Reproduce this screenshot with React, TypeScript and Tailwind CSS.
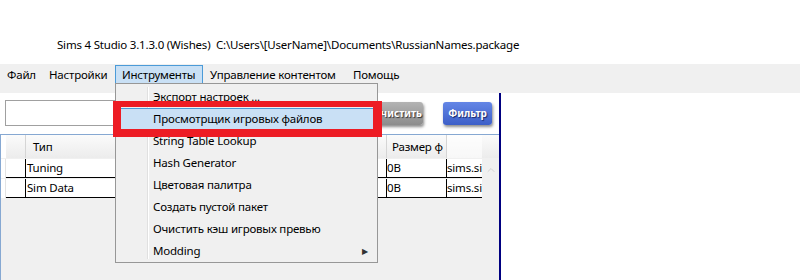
import { ChevronUp } from "lucide-react";

const menu = [
  { label: "Файл", w: "w-[42px]" },
  { label: "Настройки", w: "w-[73px]" },
  { label: "Инструменты", w: "w-[88px]", active: true },
  { label: "Управление контентом", w: "w-[143px]" },
  { label: "Помощь", w: "w-[60px]" },
];

const items = [
  "Экспорт настроек ...",
  "Просмотрщик игровых файлов",
  "String Table Lookup",
  "Hash Generator",
  "Цветовая палитра",
  "Создать пустой пакет",
  "Очистить кэш игровых превью",
  "Modding",
];

const rows = ["Tuning", "Sim Data"];

export default function App() {
  return (
    <div className="relative w-[800px] h-[280px] overflow-hidden bg-white text-[11.5px] tracking-[-0.2px] text-black font-['Noto_Sans',sans-serif] whitespace-nowrap">
      {/* window title */}
      <div className="h-[64px] flex items-end pb-[11px] pl-[57px] leading-[16px]">
        Sims 4 Studio 3.1.3.0 (Wishes)&nbsp;&nbsp;C:\Users\[UserName]\Documents\RussianNames.package
      </div>

      {/* menu strip */}
      <div className="h-[29px] bg-[#f0f0f0] pt-[1px]">
        <div className="flex h-[19px]">
          {menu.map((m) => (
            <div
              key={m.label}
              className={`${m.w} pl-[6px] flex items-center leading-none border ${
                m.active ? "bg-[#c9e0f5] border-[#4b9bd8]" : "border-transparent"
              }`}
            >
              {m.label}
            </div>
          ))}
        </div>
      </div>

      <div className="flex h-[187px]">
        <div className="w-[499px] flex flex-col">
          {/* search + buttons */}
          <div className="h-[41px] flex items-start">
            <div className="ml-[5px] mt-[7px] w-[355px] h-[26px] border border-[#a0a0a0] bg-white" />
            <button className="ml-[12px] mt-[9px] w-[51px] h-[23px] rounded-[3px] bg-gradient-to-b from-[#b4b4b4] to-[#8c8c8c] shadow-[1px_2px_3px_rgba(0,0,0,0.45)] text-white font-bold text-[10px] tracking-normal [text-shadow:1px_1px_1px_#333]">
              Очистить
            </button>
            <button className="ml-[20px] mt-[9px] w-[49px] h-[23px] rounded-[3px] bg-gradient-to-b from-[#6486e6] to-[#3d5fc8] shadow-[1px_2px_3px_rgba(0,0,0,0.45)] text-white font-bold text-[10px] tracking-normal [text-shadow:1px_1px_1px_#1a2a6a]">
              Фильтр
            </button>
          </div>

          {/* data grid */}
          <div className="relative flex-1 bg-[#f0f0f0] border-l border-t border-[#86a8d2]">
            <div className="flex h-[23px] bg-gradient-to-b from-[#fbfbfb] to-[#ececec]">
              <div className="w-[25px] flex">
                <div className="w-[5px] bg-white" />
                <div className="flex-1 border-r border-[#d5d5d5]" />
              </div>
              <div className="w-[361px] pl-[7px] flex items-center border-r border-[#d5d5d5]">Тип</div>
              <div className="w-[60px] pl-[5px] flex items-center border-r border-[#d5d5d5] overflow-hidden">Размер ф</div>
              <div className="w-[35px] bg-white/60" />
            </div>
            {rows.map((r) => (
              <div key={r} className="flex h-[19px] mt-[1px] first-of-type:mt-0">
                <div className="w-[5px] bg-white border-r border-[#e3e3e3]" />
                <div className="w-[20px] bg-white border-b border-r border-black" />
                <div className="w-[361px] bg-white border-b border-r border-black pl-[1px] flex items-center">{r}</div>
                <div className="w-[60px] bg-white border-b border-r border-black flex items-center">0B</div>
                <div className="w-[35px] bg-white border-b border-black flex items-center overflow-hidden">sims.si</div>
              </div>
            ))}
            <ChevronUp size={12} strokeWidth={1.5} className="absolute left-[484px] top-[29px] text-[#c8c8c8]" />
          </div>
        </div>
        <div className="w-[2px] bg-[#000080]" />
        <div className="flex-1 bg-white" />
      </div>

      {/* dropdown */}
      <div className="absolute left-[115px] top-[83px] w-[263px] h-[180px] bg-[#f0f0f0] border border-[#979797] pt-[2px]">
        <div className="absolute left-[31px] top-[3px] bottom-[3px] w-[2px] border-l border-[#e0e0e0] bg-white" />
        {items.map((it, i) => (
          <div
            key={it}
            className={`relative h-[22px] mx-[2px] flex items-center pl-[34px] border ${
              i === 1 ? "bg-[#c9e0f5] border-[#4b9bd8]" : "border-transparent"
            }`}
          >
            {it}
            {it === "Modding" && (
              <span className="absolute right-[6px] text-[8px] text-[#333]">▶</span>
            )}
          </div>
        ))}
      </div>

      {/* red highlight */}
      <div className="absolute left-[113px] top-[101px] w-[269px] h-[36px] border-l-[8px] border-r-[9px] border-t-[6px] border-b-[8px] border-[#ed1c24]" />
    </div>
  );
}
